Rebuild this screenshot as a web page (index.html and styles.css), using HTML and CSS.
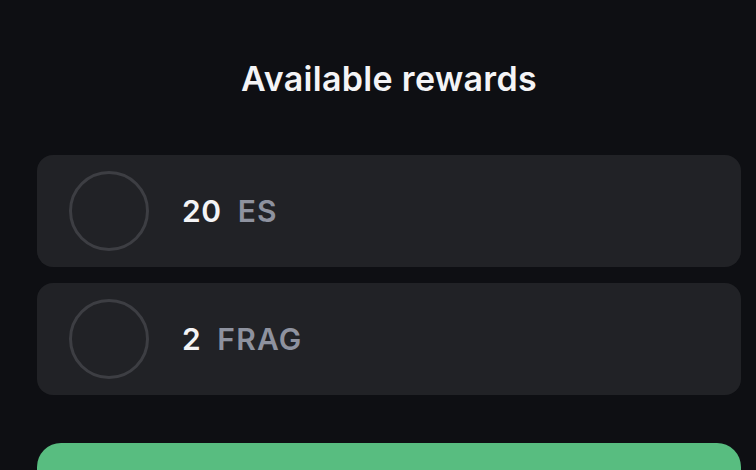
FILE: index.html
```html
<!DOCTYPE html>
<html>
<head>
<meta charset="utf-8">
<link rel="stylesheet" href="styles.css">
</head>
<body>
<main class="page">
  <h1 class="title">Available rewards</h1>
  <ul class="rewards">
    <li class="reward">
      <span class="reward-icon"></span>
      <span class="reward-amount">20</span>
      <span class="reward-unit">ES</span>
    </li>
    <li class="reward">
      <span class="reward-icon"></span>
      <span class="reward-amount">2</span>
      <span class="reward-unit">FRAG</span>
    </li>
  </ul>
  <button class="claim"></button>
</main>
</body>
</html>
```
FILE: styles.css
```css
html, body {
  margin: 0;
  padding: 0;
  background: #0e0f13;
  height: 100%;
  overflow: hidden;
}
.page {
  font-family: Inter, "Noto Sans", sans-serif;
  padding: 0 15px 0 37px;
  display: flex;
  flex-direction: column;
}
.title {
  margin: 59px 0 0;
  font-size: 34px;
  line-height: 40px;
  font-weight: 600;
  letter-spacing: 0.3px;
  color: #f4f4f6;
  text-align: center;
}
.rewards {
  list-style: none;
  margin: 56px 0 0;
  padding: 0;
  display: flex;
  flex-direction: column;
  gap: 16px;
}
.reward {
  height: 112px;
  box-sizing: border-box;
  background: #212226;
  border-radius: 16px;
  display: flex;
  align-items: center;
  padding-left: 32px;
}
.reward-icon {
  width: 80px;
  height: 80px;
  box-sizing: border-box;
  border: 3px solid #3d3e43;
  border-radius: 50%;
  margin-right: 33px;
}
.reward-amount {
  font-size: 30px;
  font-weight: 600;
  letter-spacing: 0.6px;
  color: #f4f4f6;
  margin-right: 16px;
}
.reward-unit {
  font-size: 30px;
  font-weight: 600;
  letter-spacing: 1.2px;
  color: #8e929f;
}
.claim {
  margin-top: 48px;
  height: 80px;
  border: none;
  border-radius: 24px;
  background: #58bd80;
}
```
